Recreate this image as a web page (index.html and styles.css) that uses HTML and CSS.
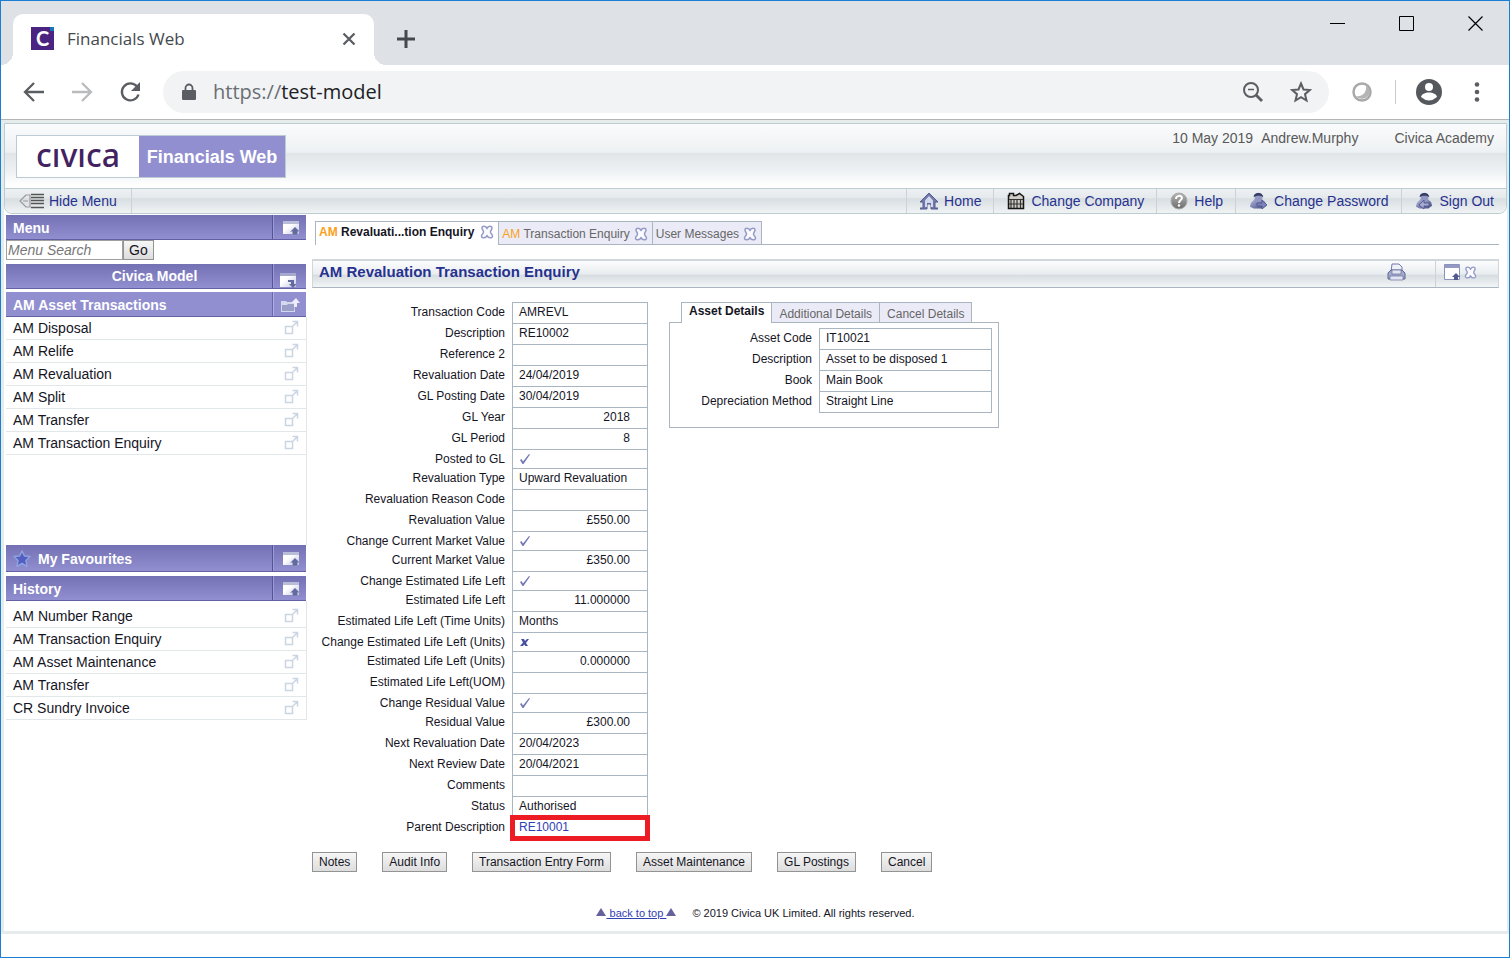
FILE: index.html
```
<!DOCTYPE html>
<html lang="en">
  <head>
    <meta charset="UTF-8" />
    <meta name="viewport" content="width=device-width, initial-scale=1.0" />
    <title>Financials Web</title>
    <link rel="stylesheet" href="styles.css">
  </head>
  <body>
    <!-- Shared icons -->
    <svg class="sprite" aria-hidden="true">
      <defs>
        <linearGradient id="steel" x1="0" y1="0" x2="1" y2="1">
          <stop offset="0" stop-color="#b4bae0" />
          <stop offset="1" stop-color="#42487e" />
        </linearGradient>
        <linearGradient id="grey" x1="0" y1="0" x2="0" y2="1">
          <stop offset="0" stop-color="#b5b5b5" />
          <stop offset="1" stop-color="#6c6c6c" />
        </linearGradient>
        <linearGradient id="pane" x1="0" y1="0" x2="1" y2="1">
          <stop offset="0.4" stop-color="#ffffff" />
          <stop offset="1" stop-color="#c3c6e2" />
        </linearGradient>
      </defs>
      <symbol id="popout" viewBox="0 0 15 15">
        <path d="M1.500 6.500h7v7h-7zM8.500 1.500h5v5M13.500 1.500L8.500 6.500" fill="none" stroke="#ccd5e4" stroke-width="1.500" />
      </symbol>
      <symbol id="panel" viewBox="0 0 18 16">
        <path d="M1 1h16v13H1z" fill="url(#pane)" />
        <path d="M1 1h16v3H1z" fill="#babdd8" />
        <path d="M13 7l4.500 4.500h-2V15h-5v-3.500h-2z" fill="#626a9e" stroke="#9da3ca" stroke-width=".6" />
      </symbol>
      <symbol id="panel-down" viewBox="0 0 18 16">
        <path d="M1 1h16v14H1z" fill="url(#pane)" />
        <path d="M1 1h16v3H1z" fill="#a5a9ce" />
        <path d="M9 8h6v4h2.500L14 16l-4-4h2v-2H9z" fill="#626a9e" />
      </symbol>
      <symbol id="close" viewBox="0 0 14 14">
        <path d="M7 3.500C6 .5 2 .5 2 3c0 2 1.500 2 1.500 4S1.500 9 1.500 11c0 2.500 4.500 2.500 5.500-.5 1 3 5.500 3 5.500.5 0-2-2-2-2-4s1.500-2 1.500-4c0-2.500-4-2.500-5 .5z" fill="#fafaff" stroke="#949bc6" stroke-width="1.500" stroke-linejoin="round" />
      </symbol>
      <symbol id="tick" viewBox="0 0 12 12">
        <path d="M1 7l1.500-1 1.500 2.500L10 1l1 .5L4.500 11h-1z" fill="#7279b5" />
      </symbol>
      <symbol id="cross" viewBox="0 0 12 12">
        <path d="M2 3h3l1 2 2-2h2L7 7l2 3H6.500L5 8.500 4 10H1l3-3.500z" fill="#4850a0" />
      </symbol>
      <symbol id="user" viewBox="0 0 20 18">
        <path d="M6 7L2 11l-1 4 4 2h9l4-3-1-4-4-3z" fill="url(#steel)" />
        <path d="M6 4c0-5 8-5 8 0v4c-1 3-7 3-8 0z" fill="#9298c2" />
        <path d="M5 5c-1-6 10-6 10 0-3-2-7-2-10 0z" fill="#343c67" />
      </symbol>
    </svg>

    <div class="window">
      <!-- Browser chrome -->
      <div class="tab-strip">
        <div class="browser-tab">
          <span class="favicon">C</span>
          <span class="browser-tab-title">Financials Web</span>
          <button class="plain" aria-label="Close tab">
            <svg width="14" height="14" viewBox="0 0 14 14"><path d="M1.500 1.500l11 11M12.500 1.500l-11 11" stroke="#5a5e63" stroke-width="2.300" /></svg>
          </button>
        </div>
        <button class="plain new-tab" aria-label="New tab">
          <svg width="18" height="18" viewBox="0 0 18 18"><path d="M9 0v18M0 9h18" stroke="#45494d" stroke-width="3" /></svg>
        </button>
        <div class="window-buttons">
          <button class="plain" aria-label="Minimise"><svg width="16" height="16"><path d="M0 7.500h15" stroke="#000" /></svg></button>
          <button class="plain" aria-label="Maximise"><svg width="16" height="16"><path d="M.5.5h14v14H.5z" stroke="#000" fill="none" /></svg></button>
          <button class="plain" aria-label="Close"><svg width="16" height="16"><path d="M.5.5l14 14M14.500.5l-14 14" stroke="#000" stroke-width="1.200" /></svg></button>
        </div>
      </div>

      <div class="toolbar">
        <button class="plain" aria-label="Back"><svg width="24" height="20" viewBox="0 0 24 20"><path d="M22 10H4M12 1L3 10l9 9" fill="none" stroke="#5a5e63" stroke-width="2.300" /></svg></button>
        <button class="plain" aria-label="Forward"><svg width="24" height="20" viewBox="0 0 24 20"><path d="M2 10h18M12 1l9 9-9 9" fill="none" stroke="#b9bbbd" stroke-width="2.300" /></svg></button>
        <button class="plain" aria-label="Reload"><svg width="24" height="22" viewBox="0 0 24 22"><path d="M19 5.500a8.500 8.500 0 1 0 1.500 8" fill="none" stroke="#5a5e63" stroke-width="2.300" /><path d="M22 1v9h-9z" fill="#5a5e63" /></svg></button>
        <div class="address">
          <svg width="14" height="18" viewBox="0 0 14 18"><path d="M1 7h12q1 0 1 1v8q0 1-1 1H1q-1 0-1-1V8q0-1 1-1z" fill="#5a5e63" /><path d="M3.500 7V5a3.500 3.500 0 0 1 7 0v2" fill="none" stroke="#5a5e63" stroke-width="1.800" /></svg>
          <span class="url"><span>https://</span>test-model</span>
          <svg width="22" height="22" viewBox="0 0 22 22"><circle cx="9" cy="9" r="7" fill="none" stroke="#5a5e63" stroke-width="2" /><path d="M14 14l6 6" stroke="#5a5e63" stroke-width="2.800" /><path d="M6 8.500h6" stroke="#5a5e63" stroke-width="1.500" /></svg>
          <svg width="22" height="22" viewBox="0 0 22 22"><path d="M11 2.500l2.500 6 6.300.500-4.800 4.200 1.500 6.300-5.500-3.400-5.500 3.400L7 13.200 2.200 9l6.300-.5z" fill="none" stroke="#5a5e63" stroke-width="2" /></svg>
        </div>
        <svg class="extension" width="22" height="22" viewBox="0 0 22 22"><circle cx="11" cy="11" r="8.500" fill="#fff" stroke="#a9a9a9" stroke-width="2.500" /><path d="M15 4c4 3 5 9 1 12s-9 2-11-1c7 1 11-4 10-11z" fill="#b5b5b5" /></svg>
        <span class="divider"></span>
        <svg width="26" height="26" viewBox="0 0 26 26"><circle cx="13" cy="13" r="13" fill="#55595e" /><circle cx="13" cy="8" r="4" fill="#fff" /><path d="M5 18c1-6 15-6 16 0q-8 7-16 0z" fill="#fff" /></svg>
        <svg class="kebab" width="6" height="22" viewBox="0 0 6 22"><g fill="#5a5e63"><circle cx="3" cy="3.500" r="2.300" /><circle cx="3" cy="11" r="2.300" /><circle cx="3" cy="18.500" r="2.300" /></g></svg>
      </div>

      <div class="page">
        <header>
          <div class="banner">
            <div class="logo">
              <span class="logo-name">cıvıca</span>
              <span class="logo-product">Financials Web</span>
            </div>
            <div class="user-info">
              <span>10 May 2019</span>
              <span>Andrew.Murphy</span>
              <span class="company">Civica Academy</span>
            </div>
          </div>
          <nav>
            <a href="#" class="hide-menu">
              <svg width="25" height="16" viewBox="0 0 25 16"><path d="M7 2L1 8l6 6h4V2zM4 8h5" fill="none" stroke="#999" stroke-width="1.200" /><path d="M12 1.500h13M12 4.500h13M12 7.500h13M12 10.500h13M12 14.500h13" stroke="#555" stroke-width="1.700" /></svg>
              Hide Menu
            </a>
            <a href="#">
              <svg width="18" height="18" viewBox="0 0 18 18"><path d="M9 1L0 10h3v6H0v1h7v-5h4v5h7v-1h-3v-6h3z" fill="#737aaa" stroke="#555d91" /><path d="M9 4L5 8.500V15h2v-4h4v4h2V8.500z" fill="#d4d8ed" /></svg>
              Home
            </a>
            <a href="#">
              <svg width="18" height="18" viewBox="0 0 18 18"><path d="M1.500 16.500V3.500h1v-2h4v2H9l3.500-2 4 3v12z" fill="#cfcdc6" stroke="#161616" stroke-width="1.500" /><path d="M4 7v9M7 7v9M10 7v9M13.500 7v9M2 7.500h14M2 12h14" stroke="#343434" stroke-width="1.200" /></svg>
              Change Company
            </a>
            <a href="#">
              <svg width="18" height="18" viewBox="0 0 18 18"><circle cx="9" cy="9" r="8" fill="url(#grey)" stroke="#aaa" /><path d="M6 7c0-4 6-4 6-1 0 2-3 2-3 5" fill="none" stroke="#fff" stroke-width="2" /><circle cx="9" cy="13.500" r="1.200" fill="#fff" /></svg>
              Help
            </a>
            <a href="#">
              <svg width="19" height="18"><use href="#user" /><path d="M8 11h5V8l5 5-5 4v-3H8z" fill="#7c83b6" stroke="#4b5288" stroke-width=".8" /></svg>
              Change Password
            </a>
            <a href="#">
              <svg width="19" height="18"><use href="#user" /><path d="M14 11H9V8l-5 5 5 4v-3h5z" fill="#a4aad2" stroke="#4b5288" stroke-width=".8" /></svg>
              Sign Out
            </a>
          </nav>
        </header>

        <div class="columns">
          <aside>
            <h2 class="bar"><span>Menu</span><svg width="18" height="16"><use href="#panel" /></svg></h2>
            <form class="search">
              <input type="text" placeholder="Menu Search" aria-label="Menu Search" />
              <button type="button">Go</button>
            </form>
            <h2 class="bar model"><span>Civica Model</span><svg width="18" height="16"><use href="#panel-down" /></svg></h2>
            <h2 class="bar light"><span>AM Asset Transactions</span><svg width="20" height="16" viewBox="0 0 20 16"><path d="M1 4h5l1 1h8v10H1z" fill="#d5d8ec" /><path d="M2 8h5l1-1h7l-1 7H2z" fill="#9a9fc9" /><path d="M14 10V6h-3l5-5 4 5h-3v4z" fill="#edeefa" /></svg></h2>
            <ul class="links menu-list">
              <li><a href="#">AM Disposal</a><svg width="15" height="15"><use href="#popout" /></svg></li>
              <li><a href="#">AM Relife</a><svg width="15" height="15"><use href="#popout" /></svg></li>
              <li><a href="#">AM Revaluation</a><svg width="15" height="15"><use href="#popout" /></svg></li>
              <li><a href="#">AM Split</a><svg width="15" height="15"><use href="#popout" /></svg></li>
              <li><a href="#">AM Transfer</a><svg width="15" height="15"><use href="#popout" /></svg></li>
              <li><a href="#">AM Transaction Enquiry</a><svg width="15" height="15"><use href="#popout" /></svg></li>
            </ul>
            <h2 class="bar favourites">
              <svg width="18" height="18" viewBox="0 0 18 18"><path d="M9 1l2.500 5 5.500.5-4 4 1 6-5-3-5 3 1-6-4-4 5.500-.5z" fill="#525fc0" stroke="#8fa2e0" stroke-width="1.500" stroke-linejoin="round" /></svg>
              <span>My Favourites</span><svg width="18" height="16"><use href="#panel" /></svg>
            </h2>
            <h2 class="bar"><span>History</span><svg width="18" height="16"><use href="#panel" /></svg></h2>
            <ul class="links history-list">
              <li><a href="#">AM Number Range</a><svg width="15" height="15"><use href="#popout" /></svg></li>
              <li><a href="#">AM Transaction Enquiry</a><svg width="15" height="15"><use href="#popout" /></svg></li>
              <li><a href="#">AM Asset Maintenance</a><svg width="15" height="15"><use href="#popout" /></svg></li>
              <li><a href="#">AM Transfer</a><svg width="15" height="15"><use href="#popout" /></svg></li>
              <li><a href="#">CR Sundry Invoice</a><svg width="15" height="15"><use href="#popout" /></svg></li>
            </ul>
          </aside>

          <main>
            <div class="tabs">
              <a href="#" class="tab active"><span><b>AM</b> Revaluati...tion Enquiry</span><svg width="14" height="14"><use href="#close" /></svg></a>
              <a href="#" class="tab"><span><b>AM</b> Transaction Enquiry</span><svg width="14" height="14"><use href="#close" /></svg></a>
              <a href="#" class="tab"><span>User Messages</span><svg width="14" height="14"><use href="#close" /></svg></a>
            </div>

            <div class="title-bar">
              <h1>AM Revaluation Transaction Enquiry</h1>
              <button class="plain print" aria-label="Print"><svg width="19" height="20" viewBox="0 0 19 20"><path d="M4 10l1-8h7l3 3v5z" fill="#eef0fa" stroke="#7379a8" /><path d="M1 11l3-3h11l3 3v6H1z" fill="#a3a8cd" stroke="#5f668f" /><path d="M5 8h9v4H5zM3 14h13v4H3z" fill="#e1e4f3" stroke="#6b7199" stroke-width=".7" /></svg></button>
              <div class="title-actions">
                <svg width="17" height="18" viewBox="0 0 17 18"><path d="M.5.5h15v15H.5z" fill="#fff" stroke="#8c92bd" /><path d="M1 1h15v3H1z" fill="#9499c5" /><path d="M12 9l4 4h-2v3h-4v-3H8z" fill="#525a91" /></svg>
                <svg width="13" height="13" viewBox="0 0 14 14"><use href="#close" /></svg>
              </div>
            </div>

            <div class="details">
              <table class="fields">
                <tr><th scope="row">Transaction Code</th><td>AMREVL</td></tr>
                <tr><th scope="row">Description</th><td>RE10002</td></tr>
                <tr><th scope="row">Reference 2</th><td></td></tr>
                <tr><th scope="row">Revaluation Date</th><td>24/04/2019</td></tr>
                <tr><th scope="row">GL Posting Date</th><td>30/04/2019</td></tr>
                <tr><th scope="row">GL Year</th><td class="number">2018</td></tr>
                <tr><th scope="row">GL Period</th><td class="number">8</td></tr>
                <tr class="flag"><th scope="row">Posted to GL</th><td><svg width="12" height="12"><use href="#tick" /></svg></td></tr>
                <tr><th scope="row">Revaluation Type</th><td>Upward Revaluation</td></tr>
                <tr><th scope="row">Revaluation Reason Code</th><td></td></tr>
                <tr><th scope="row">Revaluation Value</th><td class="number">£550.00</td></tr>
                <tr class="flag"><th scope="row">Change Current Market Value</th><td><svg width="12" height="12"><use href="#tick" /></svg></td></tr>
                <tr><th scope="row">Current Market Value</th><td class="number">£350.00</td></tr>
                <tr class="flag"><th scope="row">Change Estimated Life Left</th><td><svg width="12" height="12"><use href="#tick" /></svg></td></tr>
                <tr><th scope="row">Estimated Life Left</th><td class="number">11.000000</td></tr>
                <tr><th scope="row">Estimated Life Left (Time Units)</th><td>Months</td></tr>
                <tr class="flag"><th scope="row">Change Estimated Life Left (Units)</th><td><svg width="12" height="12"><use href="#cross" /></svg></td></tr>
                <tr><th scope="row">Estimated Life Left (Units)</th><td class="number">0.000000</td></tr>
                <tr><th scope="row">Estimated Life Left(UOM)</th><td></td></tr>
                <tr class="flag"><th scope="row">Change Residual Value</th><td><svg width="12" height="12"><use href="#tick" /></svg></td></tr>
                <tr><th scope="row">Residual Value</th><td class="number">£300.00</td></tr>
                <tr><th scope="row">Next Revaluation Date</th><td>20/04/2023</td></tr>
                <tr><th scope="row">Next Review Date</th><td>20/04/2021</td></tr>
                <tr><th scope="row">Comments</th><td></td></tr>
                <tr><th scope="row">Status</th><td>Authorised</td></tr>
                <tr><th scope="row">Parent Description</th><td class="highlight"><a href="#">RE10001</a></td></tr>
              </table>

              <section class="asset">
                <div class="asset-tabs">
                  <a href="#" class="asset-tab active">Asset Details</a>
                  <a href="#" class="asset-tab">Additional Details</a>
                  <a href="#" class="asset-tab">Cancel Details</a>
                </div>
                <div class="asset-panel">
                  <table class="fields">
                    <tr><th scope="row">Asset Code</th><td>IT10021</td></tr>
                    <tr><th scope="row">Description</th><td>Asset to be disposed 1</td></tr>
                    <tr><th scope="row">Book</th><td>Main Book</td></tr>
                    <tr><th scope="row">Depreciation Method</th><td>Straight Line</td></tr>
                  </table>
                </div>
              </section>
            </div>

            <div class="actions">
              <button>Notes</button>
              <button>Audit Info</button>
              <button>Transaction Entry Form</button>
              <button>Asset Maintenance</button>
              <button>GL Postings</button>
              <button>Cancel</button>
            </div>
          </main>
        </div>

        <footer>
          <span class="arrow"></span><a href="#">&nbsp;back to top&nbsp;</a><span class="arrow"></span>
          <span class="copyright">© 2019 Civica UK Limited. All rights reserved.</span>
        </footer>
      </div>
    </div>
  </body>
</html>
```
FILE: styles.css
```
* {
  box-sizing: border-box;
}

body {
  margin: 0;
  font-family: "Liberation Sans", Arial, sans-serif;
  font-size: 12px;
  color: #15151f;
  background-color: white;
}

a {
  color: inherit;
  text-decoration: none;
}

svg {
  flex-shrink: 0;
}

.sprite {
  position: absolute;
  width: 0;
  height: 0;
}

.window {
  min-height: 100vh;
  border: 1px solid #1a7fd4;
}

.plain {
  display: flex;
  padding: 0;
  border: none;
  background: none;
}

/* Browser tabs */
.tab-strip {
  display: flex;
  height: 64px;
  padding-left: 12px;
  background-color: #dee1e6;
}

.browser-tab {
  position: relative;
  display: flex;
  align-items: center;
  width: 361px;
  margin-top: 13px;
  padding: 0 18px 2px;
  background-color: white;
  border-radius: 10px 10px 0 0;
}

/* Curved feet of the tab */
.browser-tab::before,
.browser-tab::after {
  content: "";
  position: absolute;
  bottom: 0;
  width: 12px;
  height: 12px;
}

.browser-tab::before {
  left: -12px;
  background: radial-gradient(circle at 0 0, #dee1e6 12px, white 12px);
}

.browser-tab::after {
  right: -12px;
  background: radial-gradient(circle at 100% 0, #dee1e6 12px, white 12px);
}

.favicon {
  width: 23px;
  height: 23px;
  background: linear-gradient(#1676bd, #1676bd) top right / 4px 4px no-repeat #4b2482;
  color: white;
  font: bold 20px/23px Lato, sans-serif;
  text-align: center;
}

.browser-tab-title {
  flex: 1;
  margin-left: 13px;
  font: 17px "Open Sans", sans-serif;
  color: #45494d;
}

.new-tab {
  margin: 29px 0 0 23px;
  height: 18px;
}

.window-buttons {
  display: flex;
  gap: 53px;
  margin: 15px 25px 0 auto;
}

/* Address bar */
.toolbar {
  display: flex;
  align-items: center;
  height: 55px;
  padding: 0 29px 1px 21px;
  border-bottom: 1px solid #b2b4b6;
}

.toolbar > button {
  margin-right: 24px;
}

.toolbar > button:nth-child(3) {
  margin-right: 21px;
}

.address {
  display: flex;
  flex: 1;
  align-items: center;
  gap: 26px;
  height: 42px;
  margin-right: 22px;
  padding: 0 17px 0 19px;
  background-color: #f1f3f4;
  border-radius: 21px;
}

.url {
  flex: 1;
  margin-left: -9px;
  padding-bottom: 1px;
  font: 20px "Open Sans", sans-serif;
  color: #202124;
}

.url span {
  color: #6b6f74;
}

.divider {
  width: 1px;
  height: 24px;
  margin: 0 20px 0 22px;
  background-color: #c8cacc;
}

.kebab {
  margin-left: 32px;
}

/* Application page */
.page {
  border: solid #e6ebec;
  border-width: 3px 2px 3px 3px;
}

header {
  border: 1px solid #bccdd2;
  border-radius: 0 0 8px 8px;
}

.banner {
  display: flex;
  justify-content: space-between;
  height: 64px;
  padding: 11px;
  background: linear-gradient(#fafbfc, #eef1f3 44%, #e1e5e8 46%, #eff2f4 75%, #ffffff 96%);
}

.logo {
  display: flex;
  height: 43px;
  border: 1px solid #becbd4;
}

.logo-name {
  width: 122px;
  background-color: white;
  color: #42235f;
  font: 500 32px/37px "Noto Sans", sans-serif;
  text-align: center;
}

.logo-product {
  width: 146px;
  background-color: #918fd0;
  color: white;
  font-size: 18px;
  font-weight: bold;
  line-height: 42px;
  text-align: center;
}

.user-info {
  display: flex;
  gap: 8px;
  margin: -5px 1px 0 0;
  font-size: 14px;
  color: #595959;
}

.user-info .company {
  margin-left: 28px;
}

nav {
  display: flex;
  height: 25px;
  border-top: 1px solid #bccdd2;
  background: linear-gradient(#eef1f3, #e4e9eb 38%, #d8dee2 40%, #f0f3f4);
  border-radius: 0 0 8px 8px;
}

nav a {
  display: flex;
  align-items: center;
  gap: 6px;
  padding: 0 12px 1px 13px;
  border-left: 1px solid #cbd3d7;
  font-size: 14px;
  color: #26318f;
}

nav .hide-menu {
  gap: 5px;
  margin-right: auto;
  padding: 0 14px 1px;
  border-left: none;
  border-right: 1px solid #cbd3d7;
}

.columns {
  display: flex;
}

/* Side menu */
aside {
  width: 303px;
  padding: 1px 0 0 2px;
  flex-shrink: 0;
}

.bar {
  display: flex;
  align-items: center;
  height: 25px;
  margin: 0 1px 0 0;
  padding: 1px 6px 0 7px;
  border-bottom: 1px solid #625fa4;
  background: linear-gradient(to right, transparent 266px, #56539d 266px, #56539d 267px, #9d9bd4 267px, #9d9bd4 268px, transparent 268px),
    linear-gradient(#7371b3, #918fd0);
  color: white;
  font-size: 14px;
}

.bar span {
  flex: 1;
}

.model {
  margin: 4px 1px 3px 0;
  padding: 0 9px 0 24px;
  text-align: center;
}

.model svg {
  align-self: flex-end;
}

.light {
  background: linear-gradient(to right, transparent 266px, #6a68b2 266px, #6a68b2 267px, #b1afe0 267px, #b1afe0 268px, transparent 268px) #918fd0;
}

.favourites {
  gap: 7px;
  height: 27px;
  margin-bottom: 4px;
}

.search {
  display: flex;
  height: 20px;
}

.search input {
  width: 117px;
  padding: 0 1px 1px;
  border: 1px solid #a0a0a0;
  font: italic 14px "Liberation Sans", sans-serif;
}

.search input::placeholder {
  color: #777;
}

.search button,
.actions button {
  height: 20px;
  padding: 0 6px 1px;
  border: 1px solid #939393;
  background: linear-gradient(#f6f6f6, #dddddd);
  color: #15151f;
  font: 12px "Liberation Sans", sans-serif;
}

.search button {
  padding: 0 5px 1px;
  font-size: 14px;
}

.links {
  margin: 0;
  padding: 0;
  list-style: none;
  border-right: 1px solid #e2e7ea;
  font-size: 14px;
}

.links li {
  display: flex;
  align-items: center;
  justify-content: space-between;
  height: 23px;
  padding: 0 7px 1px;
  border-bottom: 1px solid #e2e7ea;
}

.menu-list {
  height: 228px;
}

.history-list {
  padding-top: 4px;
}

/* Main area */
main {
  flex: 1;
  padding: 7px 8px 0 5px;
}

.tabs {
  display: flex;
  height: 24px;
  margin-left: 3px;
  border-bottom: 1px solid #a9b5c0;
}

.tab {
  display: flex;
  align-items: center;
  gap: 4px;
  padding: 1px 4px 0 3px;
  border: solid #a9b5c0;
  border-width: 1px 1px 0 0;
  background-color: #ebebf7;
  color: #666;
}

.tab b {
  color: #f9a11b;
  font-weight: inherit;
}

.tab.active {
  height: 24px;
  padding: 0 4px 3px 3px;
  border-left-width: 1px;
  background-color: white;
  color: #15151f;
  font-weight: bold;
  gap: 6px;
}

.title-bar {
  display: flex;
  height: 29px;
  margin-top: 14px;
  border: 1px solid #d0d6da;
  border-top-width: 2px;
  border-bottom-color: #a9b5c0;
  background: linear-gradient(#fcfcfd, #e9edef 50%, #d7dde1 55%, #f3f5f6);
}

h1 {
  flex: 1;
  margin: 0;
  padding-left: 6px;
  font-size: 15px;
  line-height: 21px;
  color: #26318f;
}

.print {
  padding: 1px 29px 0 0;
}

.title-actions {
  display: flex;
  align-items: center;
  gap: 3px;
  width: 63px;
  padding: 0 0 3px 8px;
  border-left: 1px solid #cbd3d7;
}

.details {
  display: flex;
  align-items: flex-start;
  gap: 21px;
  margin-top: 14px;
}

.fields {
  border-spacing: 0;
}

.fields th,
.fields td {
  height: 21px;
  padding: 0;
  line-height: 18px;
  vertical-align: top;
}

.fields th {
  width: 200px;
  padding: 1px 7px 0 0;
  font-weight: normal;
  text-align: right;
}

.fields td {
  width: 136px;
  padding: 0 6px;
  border: solid #a9b5c0;
  border-width: 1px 1px 0;
}

.fields .flag th,
.fields .flag td {
  height: 19px;
}

.flag svg {
  display: block;
  margin-top: 3px;
}

.fields tr:last-child td {
  height: 22px;
  border-bottom-width: 1px;
}

.fields .number {
  padding-right: 17px;
  text-align: right;
}

.highlight {
  outline: 5px solid #ed1c24;
  outline-offset: -3px;
  color: #3040b5;
}

/* Asset details box */
.asset {
  width: 330px;
}

.asset-tabs {
  display: flex;
  height: 20px;
  padding-left: 12px;
}

.asset-tab {
  padding: 0 7px;
  border: solid #a9b5c0;
  border-width: 1px 1px 0 0;
  background-color: #ebebf7;
  color: #666;
  line-height: 22px;
}

/* Covers the panel's top border */
.asset-tab.active {
  position: relative;
  height: 21px;
  border-left-width: 1px;
  background-color: white;
  color: #15151f;
  font-weight: bold;
  line-height: 17px;
}

.asset-panel {
  padding: 5px 6px 14px 5px;
  border: 1px solid #a9b5c0;
}

.asset-panel .fields {
  width: 100%;
}

.asset-panel th {
  width: 144px;
}

.asset-panel td {
  width: auto;
}

.actions {
  display: flex;
  gap: 25px;
  margin-top: 13px;
}

footer {
  display: flex;
  align-items: center;
  justify-content: center;
  height: 59px;
  padding-top: 23px;
  font-size: 11px;
}

footer a {
  color: #3040b5;
  text-decoration: underline;
}

.arrow {
  margin-bottom: 2px;
  border: solid transparent;
  border-width: 0 5px 8px;
  border-bottom-color: #64619d;
}

.copyright {
  margin-left: 16px;
}
```
